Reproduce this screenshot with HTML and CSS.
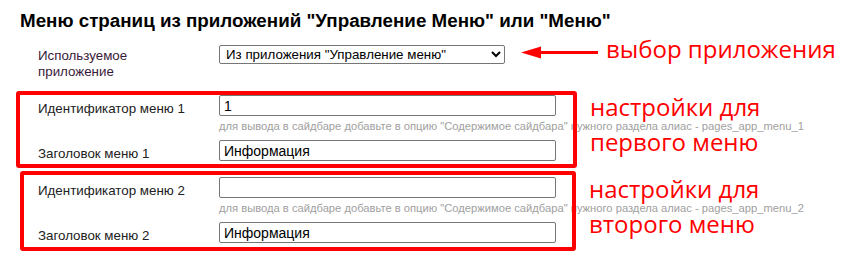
FILE: index.html
```html
<!DOCTYPE html>
<html lang="ru">
<head>
    <meta charset="UTF-8">
    <meta name="viewport" content="width=device-width, initial-scale=1.0">
    <title>Меню страниц</title>
    <link rel="stylesheet" href="styles.css">
</head>
<body>

    <h1 class="title">Меню страниц из приложений "Управление Меню" или "Меню"</h1>

    <div class="app-row">
        <label class="field-label app-label" for="app-select">Используемое приложение</label>
        <select class="app-select" id="app-select">
            <option>Из приложения "Управление меню"</option>
            <option>Из приложения "Меню"</option>
        </select>
        <svg class="arrow" width="77" height="13" viewBox="0 0 77 13">
            <polygon points="0,6.5 20,0.5 20,12.5" fill="#ff0000"/>
            <rect x="18" y="5" width="59" height="3" fill="#ff0000"/>
        </svg>
        <span class="note app-note">выбор приложения</span>
    </div>

    <div class="menu-block">
        <div class="group">
            <div class="row">
                <label class="field-label">Идентификатор меню 1</label>
                <div class="field">
                    <input type="text" class="text-input" value="1">
                    <div class="hint">для вывода в сайдбаре добавьте в опцию "Содержимое сайдбара" нужного раздела алиас - pages_app_menu_1</div>
                </div>
            </div>
            <div class="row">
                <label class="field-label">Заголовок меню 1</label>
                <div class="field">
                    <input type="text" class="text-input" value="Информация">
                </div>
            </div>
        </div>
        <div class="note block-note">настройки для<br>первого меню</div>
    </div>

    <div class="menu-block second">
        <div class="group">
            <div class="row">
                <label class="field-label">Идентификатор меню 2</label>
                <div class="field">
                    <input type="text" class="text-input" value="">
                    <div class="hint">для вывода в сайдбаре добавьте в опцию "Содержимое сайдбара" нужного раздела алиас - pages_app_menu_2</div>
                </div>
            </div>
            <div class="row">
                <label class="field-label">Заголовок меню 2</label>
                <div class="field">
                    <input type="text" class="text-input" value="Информация">
                </div>
            </div>
        </div>
        <div class="note block-note">настройки для<br>второго меню</div>
    </div>

</body>
</html>
```

FILE: styles.css
```css
body {
    margin: 0;
    font-family: "Liberation Sans", Arial, sans-serif;
    background-color: #fff;
    color: #222;
}

.title {
    margin: 10px 0 0 20px;
    font-size: 18.8px;
    line-height: 22px;
    font-weight: bold;
    color: #000;
}

.app-row {
    display: flex;
    align-items: flex-start;
    margin-top: 13px;
    padding-left: 38px;
}

.field-label {
    display: block;
    font-size: 13.33px;
    line-height: 16px;
}

.app-label {
    width: 181px;
    padding: 3px 30px 0 0;
    box-sizing: border-box;
    color: #3a1a3a;
}

.app-select {
    width: 286px;
    height: 19px;
    padding: 0 2px;
    font-family: "Liberation Sans", Arial, sans-serif;
    font-size: 13.33px;
    color: #000;
    border: 1px solid #767676;
    border-radius: 2px;
    background-color: #fff;
    box-sizing: border-box;
}

.arrow {
    margin: 0 0 0 16px;
    padding-top: 1px;
}

.note {
    font-family: "Open Sans", sans-serif;
    font-size: 24px;
    color: #ff0000;
    white-space: nowrap;
}

.app-note {
    margin: -8px 0 0 8px;
    line-height: 24px;
}

.menu-block {
    display: flex;
    align-items: flex-start;
    margin: 11px 0 0 16px;
}

.menu-block.second {
    margin: 3px 0 0 20px;
}

/* red frame is painted over the fields, like a marker on a screenshot */
.group {
    position: relative;
    width: 561px;
    padding: 4px 0 6px 22px;
    box-sizing: border-box;
}

.group::after {
    content: '';
    position: absolute;
    inset: 0;
    border: 4px solid #ff0000;
    border-radius: 3px;
    pointer-events: none;
}

.second .group {
    width: 556px;
    padding: 6px 0 7px 18px;
}

.row {
    display: grid;
    grid-template-columns: 181px 337px;
}

.row .field-label {
    padding-top: 6px;
}

.text-input {
    display: block;
    width: 337px;
    height: 21px;
    margin: 0;
    padding: 0 4px;
    font-family: "Liberation Sans", Arial, sans-serif;
    font-size: 14px;
    color: #000;
    border: 1px solid #767676;
    border-radius: 2px;
    box-sizing: border-box;
}

.hint {
    margin: 3px 0 7px;
    font-size: 11.2px;
    line-height: 14px;
    color: #a0a0a0;
    white-space: nowrap;
}

.block-note {
    margin: -2px 0 0 13px;
    line-height: 35px;
}

.second .block-note {
    margin-top: 0;
}
```
